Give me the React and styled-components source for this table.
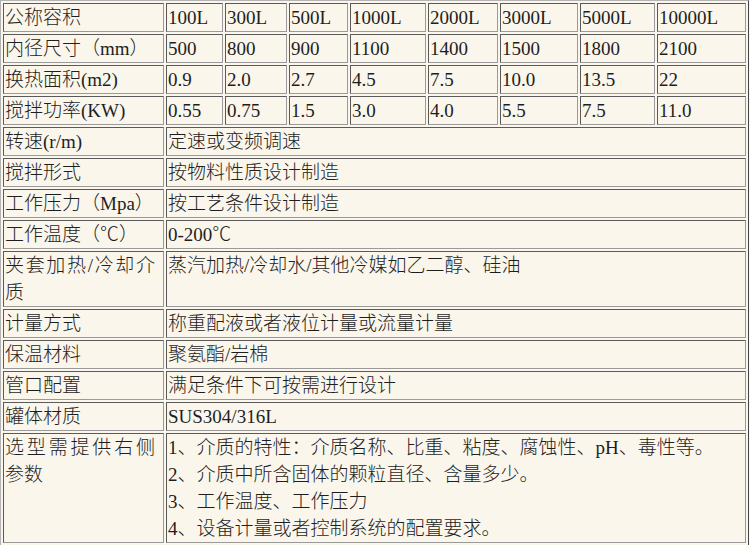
import React from "react";
import styled, { createGlobalStyle } from "styled-components";

const GlobalStyle = createGlobalStyle`
  html, body {
    margin: 0;
    padding: 0;
    background: #faf6ec;
  }
  body {
    font-family: "Liberation Serif", "Noto Sans CJK SC", serif;
    color: #1e1e1e;
  }
`;

const SpecTable = styled.div`
  display: inline-grid;
  grid-template-columns: 161px 57px 62px 59px 76px 70px 78px 75px 89px;
  gap: 2px;
  padding: 2px;
  background: #faf6ec;
  border: 1px solid;
  border-color: #b4b4b4 #474747 #474747 #b4b4b4;
`;

const Cell = styled.div`
  box-sizing: border-box;
  grid-column: span ${(p) => p.$span || 1};
  border: 1px solid;
  border-color: #5a5a5a #9a9a9a #9a9a9a #5a5a5a;
  padding: ${(p) => (p.$label ? "0 8px 0 1px" : "0 1px")};
  font-size: 19px;
  font-weight: 300;
  line-height: 27px;
  text-align: ${(p) => (p.$label ? "justify" : "left")};
  white-space: ${(p) => (p.$label ? "normal" : "nowrap")};
  overflow: hidden;
`;

const Line = styled.div`
  white-space: nowrap;
`;

const gridRows = [
  ["公称容积", ["100L", "300L", "500L", "1000L", "2000L", "3000L", "5000L", "10000L"]],
  ["内径尺寸（mm）", ["500", "800", "900", "1100", "1400", "1500", "1800", "2100"]],
  ["换热面积(m2)", ["0.9", "2.0", "2.7", "4.5", "7.5", "10.0", "13.5", "22"]],
  ["搅拌功率(KW)", ["0.55", "0.75", "1.5", "3.0", "4.0", "5.5", "7.5", "11.0"]],
];

const wideRows = [
  ["转速(r/m)", ["定速或变频调速"]],
  ["搅拌形式", ["按物料性质设计制造"]],
  ["工作压力（Mpa）", ["按工艺条件设计制造"]],
  ["工作温度（℃）", ["0-200℃"]],
  ["夹套加热/冷却介质", ["蒸汽加热/冷却水/其他冷媒如乙二醇、硅油"]],
  ["计量方式", ["称重配液或者液位计量或流量计量"]],
  ["保温材料", ["聚氨酯/岩棉"]],
  ["管口配置", ["满足条件下可按需进行设计"]],
  ["罐体材质", ["SUS304/316L"]],
  [
    "选型需提供右侧参数",
    [
      "1、介质的特性：介质名称、比重、粘度、腐蚀性、pH、毒性等。",
      "2、介质中所含固体的颗粒直径、含量多少。",
      "3、工作温度、工作压力",
      "4、设备计量或者控制系统的配置要求。",
    ],
  ],
];

export default function App() {
  return (
    <>
      <GlobalStyle />
      <SpecTable>
        {gridRows.map(([label, values]) => (
          <React.Fragment key={label}>
            <Cell $label>{label}</Cell>
            {values.map((v, i) => (
              <Cell key={i}>{v}</Cell>
            ))}
          </React.Fragment>
        ))}
        {wideRows.map(([label, lines]) => (
          <React.Fragment key={label}>
            <Cell $label>{label}</Cell>
            <Cell $span={8}>
              {lines.map((l, i) => (
                <Line key={i}>{l}</Line>
              ))}
            </Cell>
          </React.Fragment>
        ))}
      </SpecTable>
    </>
  );
}
